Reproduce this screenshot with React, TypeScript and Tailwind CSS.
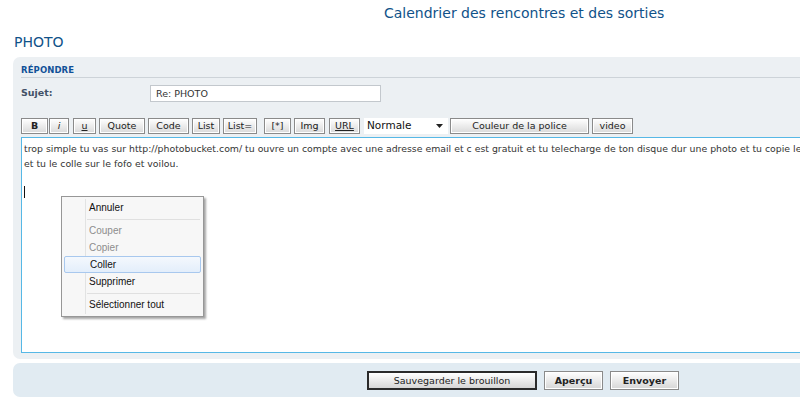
import { ReactNode } from "react";

const btn =
  "h-[16px] border border-[#8a8a8a] bg-gradient-to-b from-white to-[#d9d9d9] shadow-[inset_0_0_0_1px_#ffffff] text-[9.5px] leading-[14px] text-[#222] text-center shrink-0";

function ToolButton({
  w,
  ml = 0,
  children,
  extra = "",
}: {
  w: number;
  ml?: number;
  children: ReactNode;
  extra?: string;
}) {
  return (
    <div className={`${btn} ${extra}`} style={{ width: w, marginLeft: ml }}>
      {children}
    </div>
  );
}

function MenuItem({
  label,
  disabled,
  active,
}: {
  label: string;
  disabled?: boolean;
  active?: boolean;
}) {
  return (
    <div
      className={
        "h-[17px] mx-[2px] flex items-center pl-[25px] text-[10px] " +
        (disabled ? "text-[#8d8d8d] " : "text-[#111] ") +
        (active
          ? "border border-[#a8c8ee] rounded-[2px] bg-gradient-to-b from-[#f4f8fd] to-[#e3eefb] pl-[24px]"
          : "")
      }
    >
      {label}
    </div>
  );
}

function Separator() {
  return (
    <div className="h-[6px] flex items-center pl-[25px] pr-[3px]">
      <div className="h-px w-full bg-[#e0e0e0]" />
    </div>
  );
}

export default function App() {
  return (
    <div className="relative w-[800px] h-[400px] overflow-hidden bg-white font-['DejaVu_Sans',sans-serif]">
      <div className="h-[32px] pl-[384px] pt-[3px] text-[14px] text-[#105289]">
        Calendrier des rencontres et des sorties
      </div>
      <h2 className="pl-[14px] h-[25px] text-[14px] leading-[20px] text-[#105289]">
        PHOTO
      </h2>

      <div className="ml-[13px] w-[820px] h-[302px] rounded-[7px] bg-[#ECF0F3] pt-[9px] px-[8px]">
        <div className="h-[12px] border-b border-[#cdd3d8] text-[8.5px] font-bold leading-[9px] text-[#115098] tracking-[0.1px]">
          RÉPONDRE
        </div>
        <div className="flex mt-[7px] h-[17px]">
          <div className="w-[129px] pt-[1px] text-[9.5px] font-bold text-[#425067]">
            Sujet:
          </div>
          <div className="w-[231px] h-[17px] border border-[#c3c8cd] bg-white pl-[5px] text-[9.5px] leading-[15px] text-[#333]">
            Re: PHOTO
          </div>
        </div>

        <div className="flex mt-[16px] h-[16px] items-center">
          <ToolButton w={27} extra="font-bold">B</ToolButton>
          <ToolButton w={20} ml={1} extra="italic">i</ToolButton>
          <ToolButton w={23} ml={4} extra="underline">u</ToolButton>
          <ToolButton w={46} ml={3}>Quote</ToolButton>
          <ToolButton w={41} ml={3}>Code</ToolButton>
          <ToolButton w={28} ml={3}>List</ToolButton>
          <ToolButton w={34} ml={3}>List=</ToolButton>
          <ToolButton w={27} ml={7}>[*]</ToolButton>
          <ToolButton w={31} ml={3}>Img</ToolButton>
          <ToolButton w={31} ml={4} extra="underline">URL</ToolButton>
          <div className="ml-[4px] w-[84px] h-[16px] bg-white flex items-center justify-between pl-[3px] pr-[5px] text-[10.5px] text-[#111]">
            <span>Normale</span>
            <svg width="7" height="4" viewBox="0 0 7 4">
              <path d="M0 0h7L3.5 4z" fill="#222" />
            </svg>
          </div>
          <ToolButton w={139} ml={2}>Couleur de la police</ToolButton>
          <ToolButton w={41} ml={3}>video</ToolButton>
        </div>

        <div className="mt-[3px] h-[216px] w-[800px] border border-[#56b8e6] bg-white pl-[2px] pt-[3px] text-[9.35px] leading-[15px] text-[#333] whitespace-nowrap overflow-hidden relative">
          <div>
            trop simple tu vas sur http://photobucket.com/ tu ouvre un compte avec une adresse email et c est gratuit et tu telecharge de ton disque dur une photo et tu copie le lien
          </div>
          <div>et tu le colle sur le fofo et voilou.</div>
          <div className="mt-[15px] w-px h-[12px] bg-[#111]" />
        </div>
      </div>

      <div className="ml-[13px] mt-[4px] w-[820px] h-[34px] rounded-[7px] bg-[#E1EBF2] flex items-center pl-[354px] gap-[7px]">
        <div className="w-[170px] h-[19px] border-2 border-[#2a2a2a] bg-gradient-to-b from-white to-[#d6d6d6] text-[9.5px] leading-[15px] text-center text-[#222]">
          Sauvegarder le brouillon
        </div>
        <div className="w-[59px] h-[19px] border border-[#8a8a8a] bg-gradient-to-b from-white to-[#d6d6d6] shadow-[inset_0_0_0_1px_#ffffff] text-[9.5px] leading-[17px] text-center font-bold text-[#222]">
          Aperçu
        </div>
        <div className="w-[69px] h-[19px] border border-[#8a8a8a] bg-gradient-to-b from-white to-[#d6d6d6] shadow-[inset_0_0_0_1px_#ffffff] text-[9.5px] leading-[17px] text-center font-bold text-[#222]">
          Envoyer
        </div>
      </div>

      <div className="absolute left-[61px] top-[196px] w-[143px] h-[121px] border border-[#979797] bg-[#f7f7f7] shadow-[2px_2px_2px_rgba(0,0,0,0.35)] pt-[2px] font-['Liberation_Sans',sans-serif]">
        <div className="absolute left-[23px] top-[2px] bottom-[2px] w-px bg-[#e2e3e3]" />
        <div className="relative">
          <MenuItem label="Annuler" />
          <Separator />
          <MenuItem label="Couper" disabled />
          <MenuItem label="Copier" disabled />
          <MenuItem label="Coller" active />
          <MenuItem label="Supprimer" />
          <Separator />
          <MenuItem label="Sélectionner tout" />
        </div>
      </div>
    </div>
  );
}
